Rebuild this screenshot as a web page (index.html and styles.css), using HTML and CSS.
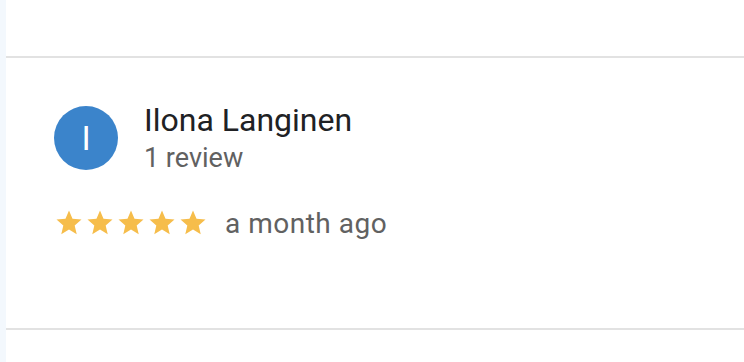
FILE: index.html
```html
<!DOCTYPE html>
<html lang="en">
<head>
<meta charset="utf-8">
<link rel="stylesheet" href="styles.css">
</head>
<body>
<div class="page">
  <div class="rail"></div>
  <div class="main">
    <div class="top"></div>
    <div class="review">
      <div class="author">
        <div class="avatar">I</div>
        <div class="info">
          <div class="name">Ilona Langinen</div>
          <div class="count">1 review</div>
        </div>
      </div>
      <div class="rating">
        <div class="stars">
          <svg class="star" viewBox="0 0 24 24"><path d="M12 17.27L18.18 21l-1.64-7.03L22 9.24l-7.19-.61L12 2 9.19 8.63 2 9.24l5.46 4.73L5.82 21z"/></svg>
          <svg class="star" viewBox="0 0 24 24"><path d="M12 17.27L18.18 21l-1.64-7.03L22 9.24l-7.19-.61L12 2 9.19 8.63 2 9.24l5.46 4.73L5.82 21z"/></svg>
          <svg class="star" viewBox="0 0 24 24"><path d="M12 17.27L18.18 21l-1.64-7.03L22 9.24l-7.19-.61L12 2 9.19 8.63 2 9.24l5.46 4.73L5.82 21z"/></svg>
          <svg class="star" viewBox="0 0 24 24"><path d="M12 17.27L18.18 21l-1.64-7.03L22 9.24l-7.19-.61L12 2 9.19 8.63 2 9.24l5.46 4.73L5.82 21z"/></svg>
          <svg class="star" viewBox="0 0 24 24"><path d="M12 17.27L18.18 21l-1.64-7.03L22 9.24l-7.19-.61L12 2 9.19 8.63 2 9.24l5.46 4.73L5.82 21z"/></svg>
        </div>
        <span class="date">a month ago</span>
      </div>
    </div>
    <div class="bottom"></div>
  </div>
</div>
</body>
</html>
```

FILE: styles.css
```css
html, body {
  margin: 0;
  padding: 0;
  background: #ffffff;
}
body {
  font-family: Roboto, "Liberation Sans", sans-serif;
  width: 744px;
  height: 362px;
  overflow: hidden;
}
.page {
  display: flex;
  height: 362px;
}
.rail {
  width: 6px;
  flex: none;
  background: #f3f8fd;
}
.main {
  flex: 1;
  display: flex;
  flex-direction: column;
}
.top {
  height: 56px;
  border-bottom: 2px solid #e2e2e2;
}
.review {
  height: 272px;
  padding: 48px 0 0 48px;
  box-sizing: border-box;
  border-bottom: 2px solid #e2e2e2;
}
.author {
  display: flex;
  align-items: flex-start;
}
.avatar {
  width: 64px;
  height: 64px;
  border-radius: 50%;
  background: #3b84cb;
  color: #ffffff;
  font-size: 34px;
  line-height: 64px;
  text-align: center;
  flex: none;
}
.info {
  margin-left: 26px;
  margin-top: -4px;
}
.name {
  font-size: 32px;
  line-height: 36px;
  color: #202124;
}
.count {
  font-size: 27px;
  line-height: 40px;
  color: #616161;
}
.rating {
  display: flex;
  align-items: flex-start;
  margin-top: 30px;
}
.stars {
  display: flex;
  gap: 1px;
}
.star {
  width: 30px;
  height: 30px;
  fill: #f6bd4b;
}
.date {
  margin-left: 17px;
  font-size: 28px;
  line-height: 32px;
  letter-spacing: 0.5px;
  color: #616161;
}
.bottom {
  flex: 1;
}
```
